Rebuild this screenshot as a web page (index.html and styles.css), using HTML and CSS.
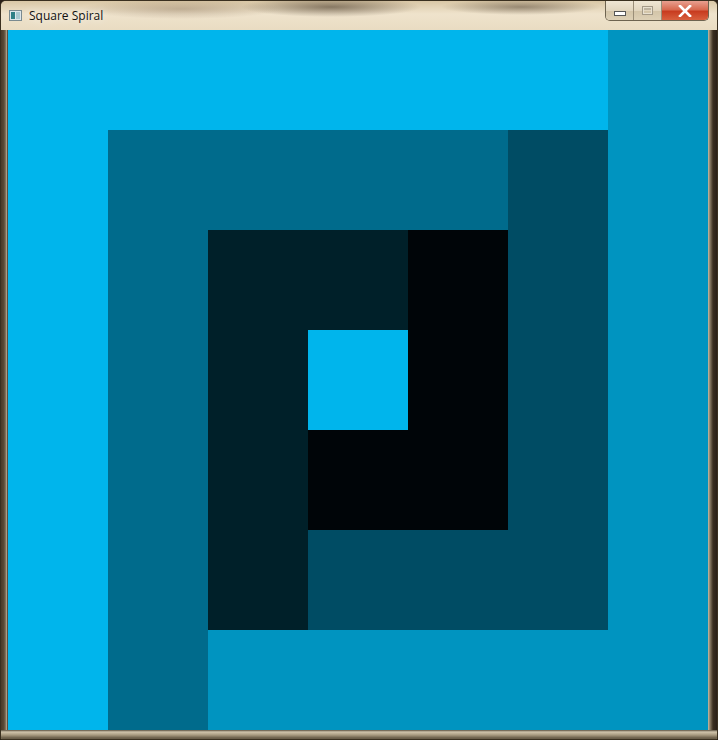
FILE: index.html
```html
<!DOCTYPE html>
<html>
<head>
<meta charset="utf-8">
<link rel="stylesheet" href="styles.css">
</head>
<body>
<div class="window">
  <div class="titlebar">
    <div class="app-icon"><span class="ic-a"></span><span class="ic-b"></span></div>
    <div class="title">Square Spiral</div>
    <div class="caption">
      <div class="cbtn min"><span class="min-glyph"></span></div>
      <div class="cbtn max"><span class="max-glyph"></span></div>
      <div class="cbtn close">
        <svg width="14" height="12" viewBox="0 0 14 12"><path d="M2 1 L12 11 M12 1 L2 11" stroke="#fff" stroke-width="2.6" stroke-linecap="square"/></svg>
      </div>
    </div>
  </div>
  <div class="body-row">
    <div class="side left"></div>
    <div class="client">
      <div class="blk a1"></div>
      <div class="blk a2"></div>
      <div class="blk b1"></div>
      <div class="blk b2"></div>
      <div class="blk c1"></div>
      <div class="blk c2"></div>
      <div class="blk d1"></div>
      <div class="blk d2"></div>
      <div class="blk e1"></div>
      <div class="blk e2"></div>
      <div class="blk f1"></div>
      <div class="blk f2"></div>
      <div class="blk g1"></div>
    </div>
    <div class="side right"></div>
  </div>
  <div class="bottom"></div>
</div>
</body>
</html>
```
FILE: styles.css
```css
html, body { margin: 0; padding: 0; }
body {
  width: 718px; height: 740px; overflow: hidden;
  background: #2a2018;
  font-family: "Open Sans", "Noto Sans", sans-serif;
}
.window {
  width: 716px; height: 738px;
  border: 1px solid #3a3020;
  border-radius: 6px 6px 2px 2px;
  display: flex; flex-direction: column;
  background: linear-gradient(180deg, #e6d8bc 0%, #d8c8a8 4%, #c8b898 30%, #b8a888 100%);
  overflow: hidden;
}
.titlebar {
  height: 29px; flex: none;
  display: flex; align-items: flex-start;
  background:
    radial-gradient(ellipse 90px 10px at 330px 6px, rgba(60,45,30,0.55), transparent),
    radial-gradient(ellipse 80px 8px at 520px 6px, rgba(60,45,30,0.45), transparent),
    radial-gradient(ellipse 100px 10px at 180px 8px, rgba(120,95,70,0.35), transparent),
    linear-gradient(180deg, #d9c7a6 0%, #efe3cc 45%, #e9dcc2 100%);
}
.app-icon {
  width: 13px; height: 11px; margin: 9px 0 0 8px;
  border: 1px solid #7a8a90; background: #dde6ea;
  display: flex; gap: 1px; padding: 1px; box-sizing: border-box;
}
.ic-a { width: 4px; background: #2f7f86; }
.ic-b { flex: 1; background: #a9c8d0; }
.title {
  margin: 6px 0 0 7px;
  font-size: 12px; color: #111;
  text-shadow: 0 0 8px rgba(255,255,255,0.9);
}
.caption {
  margin-left: auto; margin-right: 8px;
  display: flex; height: 19px;
  border: 1px solid #6e6450; border-top: none;
  border-radius: 0 0 5px 5px; overflow: hidden;
}
.cbtn { display: flex; align-items: center; justify-content: center; }
.min, .max {
  width: 27px;
  background: linear-gradient(180deg, #efe6d4 0%, #e2d6bf 50%, #d2c4a8 51%, #ddd0b6 100%);
  border-right: 1px solid #9a8e78;
}
.min-glyph { width: 10px; height: 3px; background: #fff; border: 1px solid #555; margin-top: 6px; }
.max-glyph { width: 9px; height: 7px; border: 1px solid #a49a88; box-shadow: inset 0 0 0 1px #e8e0d0, inset 0 2px 0 1px #bdb3a0; }
.close {
  width: 46px;
  background: linear-gradient(180deg, #e8a090 0%, #d86a50 45%, #c83c20 55%, #d8603e 100%);
}
.body-row { display: flex; flex: none; height: 700px; }
.side { flex: none; }
.side.left {
  width: 6px;
  background: linear-gradient(90deg, #4a3a28 0px, #5a4a36 3px, #8a7c66 5px, #c8bca4 6px);
}
.side.right {
  width: 9px;
  background: linear-gradient(90deg, #c8bca4 0px, #8a7c66 2px, #3a2e20 5px, #2a2018 9px);
}
.client {
  width: 700px; height: 700px;
  border-left: 1px solid #5a5040;
  display: grid;
  grid-template-columns: repeat(7, 100px);
  grid-template-rows: repeat(7, 100px);
}
.bottom {
  flex: 1;
  background: linear-gradient(180deg, #5a5040 0px, #d0c4ac 2px, #a89a80 5px, #6a5e4a 8px);
}
.a1 { grid-area: 1 / 1 / 2 / 7; background: #00b5ec; }
.a2 { grid-area: 2 / 1 / 8 / 2; background: #00b5ec; }
.b1 { grid-area: 1 / 7 / 8 / 8; background: #0094c0; }
.b2 { grid-area: 7 / 3 / 8 / 7; background: #0094c0; }
.c1 { grid-area: 2 / 2 / 3 / 6; background: #006b8c; }
.c2 { grid-area: 3 / 2 / 8 / 3; background: #006b8c; }
.d1 { grid-area: 2 / 6 / 7 / 7; background: #004c64; }
.d2 { grid-area: 6 / 4 / 7 / 6; background: #004c64; }
.e1 { grid-area: 3 / 3 / 4 / 5; background: #002029; }
.e2 { grid-area: 4 / 3 / 7 / 4; background: #002029; }
.f1 { grid-area: 3 / 5 / 6 / 6; background: #000508; }
.f2 { grid-area: 5 / 4 / 6 / 5; background: #000508; }
.g1 { grid-area: 4 / 4 / 5 / 5; background: #00b5ec; }
```
